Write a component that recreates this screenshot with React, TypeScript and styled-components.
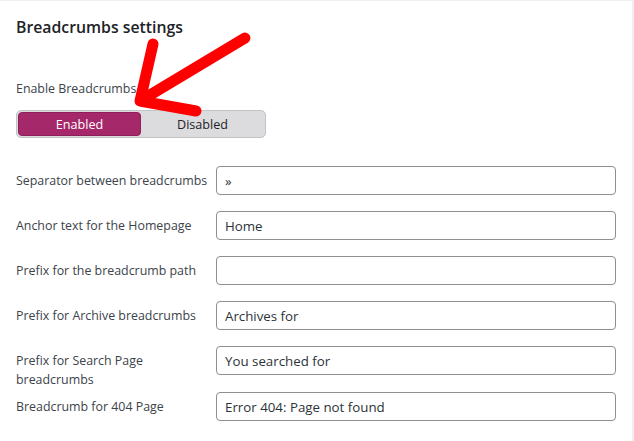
import React from "react";
import styled, { createGlobalStyle } from "styled-components";

const Global = createGlobalStyle`
  html, body { margin: 0; padding: 0; background: #f0f0f1; }
  body { font-family: "Open Sans", "Noto Sans", sans-serif; }
  * { box-sizing: border-box; }
`;

const Panel = styled.div`
  position: relative;
  width: 632px;
  height: 440px;
  margin-top: 1px;
  background: #ffffff;
  padding: 15px 0 0 16px;
  overflow: hidden;
`;

const Heading = styled.h2`
  margin: 0;
  font-size: 15.8px;
  line-height: 22px;
  font-weight: 600;
  color: #1d2327;
`;

const FieldLabel = styled.div`
  margin-top: 41px;
  font-size: 12.4px;
  line-height: 19px;
  color: #3c434a;
`;

const Toggle = styled.div`
  margin-top: 12px;
  width: 250px;
  height: 28px;
  display: flex;
  padding: 1px;
  background: #dcdcde;
  border: 1px solid #c3c4c7;
  border-radius: 5px;
`;

const ToggleOption = styled.div<{ $active?: boolean }>`
  flex: ${(p) => (p.$active ? "0 0 123px" : "1")};
  display: flex;
  align-items: center;
  justify-content: center;
  font-size: 12.6px;
  border-radius: 4px;
  color: ${(p) => (p.$active ? "#ffffff" : "#1d2327")};
  background: ${(p) => (p.$active ? "#a4286a" : "transparent")};
  border: ${(p) => (p.$active ? "1px solid #8f1f5b" : "none")};
`;

const Rows = styled.div`
  margin-top: 28px;
  display: flex;
  flex-direction: column;
`;

const Row = styled.div`
  display: grid;
  grid-template-columns: 200px 400px;
  align-items: start;
  min-height: 45px;
`;

const RowLabel = styled.label`
  font-size: 12.4px;
  line-height: 19px;
  color: #3c434a;
  padding: 5px 0 3px 0;
`;

const TextInput = styled.input`
  width: 400px;
  height: 29px;
  border: 1px solid #8c8f94;
  border-radius: 4px;
  padding: 0 8px;
  font-family: "Open Sans", "Noto Sans", sans-serif;
  font-size: 13.3px;
  color: #2c3338;
  background: #fff;
  outline: none;
`;

const Arrow = styled.svg`
  position: absolute;
  left: 0;
  top: -1px;
  pointer-events: none;
`;

const fields: { label: string; value: string }[] = [
  { label: "Separator between breadcrumbs", value: "»" },
  { label: "Anchor text for the Homepage", value: "Home" },
  { label: "Prefix for the breadcrumb path", value: "" },
  { label: "Prefix for Archive breadcrumbs", value: "Archives for" },
  { label: "Prefix for Search Page breadcrumbs", value: "You searched for" },
  { label: "Breadcrumb for 404 Page", value: "Error 404: Page not found" },
];

export default function App() {
  return (
    <>
      <Global />
      <Panel>
        <Heading>Breadcrumbs settings</Heading>
        <FieldLabel>Enable Breadcrumbs</FieldLabel>
        <Toggle>
          <ToggleOption $active>Enabled</ToggleOption>
          <ToggleOption>Disabled</ToggleOption>
        </Toggle>
        <Rows>
          {fields.map((f) => (
            <Row key={f.label}>
              <RowLabel>{f.label}</RowLabel>
              <TextInput defaultValue={f.value} />
            </Row>
          ))}
        </Rows>
        <Arrow width="634" height="441" viewBox="0 0 634 441">
          <path
            d="M245 38 L140 101 M153 44 L140 101 L196 111"
            fill="none"
            stroke="#fe0000"
            strokeWidth="11"
            strokeLinecap="round"
            strokeLinejoin="round"
          />
        </Arrow>
      </Panel>
    </>
  );
}
